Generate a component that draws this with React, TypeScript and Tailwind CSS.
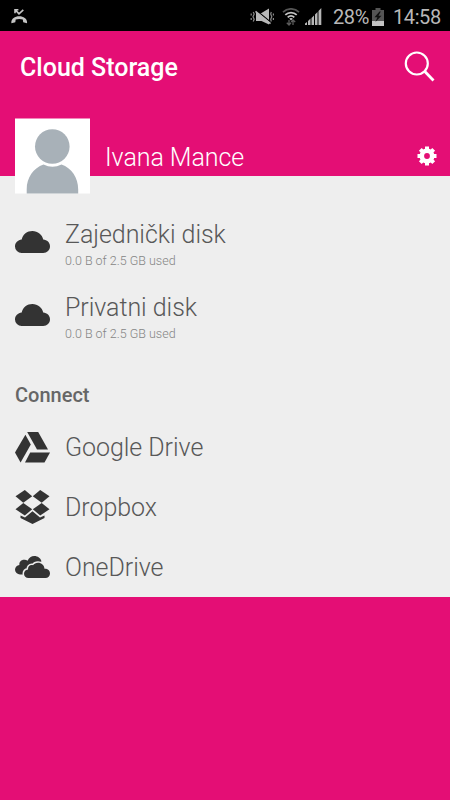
import React from "react";

const CloudIcon = () => (
    <svg width="35" height="22" viewBox="0 0 35 22" fill="#333333">
        <path d="M6.6 22A6.6 6.6 0 0 1 0 15.4C0 11.6 2.900 9 6.700 8.500C7.800 3.400 12.100 0 17.400 0C22.800 0 27.200 3.500 28.200 8.600C32 8.900 35 11.600 35 15.300C35 19.100 32.100 22 28.200 22Z" />
    </svg>
);

const DriveIcon = () => (
    <svg width="35" height="31" viewBox="0 0 35 31" fill="#333333">
        <path d="M12.200 0H23.200L33 17.500H22Z" />
        <path d="M10.400 2.800L15.800 12.500L5.600 30.600L0 20.500Z" />
        <path d="M15.200 20.500H35L29.500 30.600H10Z" />
    </svg>
);

const DropboxIcon = () => (
    <svg width="35" height="34" viewBox="0 0 35 34" fill="#333333">
        <path d="M9.800 0L17.200 6.300L8.300 12.700L.5 6.300Z" />
        <path d="M25.200 0L34.500 6.300L26.700 12.700L17.800 6.300Z" />
        <path d="M8.300 13L17.200 19.300L9.800 25.600L.5 19.300Z" />
        <path d="M26.700 13L34.500 19.300L25.200 25.600L17.800 19.300Z" />
        <path d="M17.500 21.200L25 27.500L29.500 25.400V28L17.500 34L5.500 28V25.400L10 27.500Z" />
    </svg>
);

const OneDriveIcon = () => (
    <svg width="35" height="22" viewBox="0 0 35 22">
        <path
            fill="#333333"
            d="M8 18.500H5A5 5 0 0 1 0 13.700C0 11 2 9.200 4.400 8.900C4 5.800 6.300 3.700 9 3.700C10.400 3.700 11.600 4 12.600 4.800C13.800 1.900 16.400 0 19.300 0C22.800 0 25.600 2.100 26.500 5.300L20 12Z"
        />
        <path
            fill="#333333"
            stroke="#eeeeee"
            strokeWidth="3"
            paintOrder="stroke"
            d="M13.500 22C10.900 22 9 20.100 9 17.700C9 15.300 10.700 13.700 13 13.400C12.700 10.800 14.500 8.900 17 9C17.300 9 17.700 9 18 9.200C19.100 7.600 20.900 6.700 23 6.700C26.500 6.700 29.200 9.200 29.500 12.700C32.700 12.500 35 14.600 35 17.400C35 20.100 33 22 30.500 22Z"
        />
    </svg>
);

const MissedCallIcon = () => (
    <svg width="17" height="15" viewBox="0 0 17 15" fill="#c4c4c4">
        <path d="M4 4.200V.7H7.400M4.500 1.100L8 4.800L12.300 .9" fill="none" stroke="#c4c4c4" strokeWidth="1.600" />
        <path d="M.4 14.200C-.2 10.300 3.500 7.300 8.200 7.300S16.700 10.300 16 14.200L12.200 13.200L11.800 10.600C9.600 9.800 6.900 9.800 4.700 10.600L4.300 13.200Z" />
    </svg>
);

const MuteIcon = () => (
    <svg width="24" height="18" viewBox="0 0 24 18" fill="#b8b8b8">
        <path d="M6 5H11.500L19 .5V16.500L11.500 13H6Z" />
        <path d="M6.500 2.500L20.500 14" stroke="#000" strokeWidth="1.200" />
        <path d="M5.500 3.300L20.500 15.700" stroke="#b8b8b8" strokeWidth="1.500" />
        <path
            d="M3.200 4L4.200 6L3 8.700L4.200 11.200L3.200 13.500M1.200 5.500V7.500M1.200 10V12M21.300 4L20.700 6L21.800 8.700L20.700 11.200L21.300 13.500M23.400 5.500V7.500M23.400 10V12"
            fill="none"
            stroke="#8a8a8a"
            strokeWidth="1.200"
        />
    </svg>
);

const WifiIcon = () => (
    <svg width="18" height="18" viewBox="0 0 18 18" fill="none">
        <path d="M1 4.200C5.500 -.3 12.500 -.3 17 4.200" stroke="#555555" strokeWidth="1.700" />
        <path d="M3.300 6.900C6.500 3.800 11.500 3.800 14.700 6.900M5.700 9.300C7.600 7.500 10.400 7.500 12.300 9.300" stroke="#c4c4c4" strokeWidth="1.800" />
        <path d="M7.200 10.600Q9 9.400 10.800 10.600L9 12.500Z" fill="#c4c4c4" />
        <path d="M7 12V17M4.800 14.700L7 17L9 14.700M11 17V12M9.200 14L11 12L13.200 14" stroke="#5c5c5c" strokeWidth="1.300" />
    </svg>
);

const SignalIcon = () => (
    <svg width="17" height="17" viewBox="0 0 17 17" fill="#b7b7b7">
        <path d="M0 17V15.500L2 14V17ZM3 17V13L5.500 10.500V17ZM6.500 17V10L9 7.500V17ZM10 17V6.500L12.500 4V17ZM13.500 17V3L16.300 0V17Z" />
    </svg>
);

const BatteryIcon = () => (
    <svg width="12" height="18" viewBox="0 0 12 18">
        <path fill="#555555" d="M3.500 0H8.500V2H12V13H0V2H3.500Z" />
        <path fill="#c4c4c4" d="M0 13H12V18H0Z" />
        <path fill="#111" d="M7.500 3.500L2.500 9.300H5.400L3.400 14L9.500 7.800H6.500L8.800 3.500Z" />
    </svg>
);

const SearchIcon = () => (
    <svg width="32" height="32" viewBox="0 0 32 32" fill="none" stroke="#fff">
        <circle cx="12.800" cy="12.500" r="11" strokeWidth="2.200" />
        <path d="M20.600 20.300L29.500 29.500" strokeWidth="2.800" />
    </svg>
);

const GearIcon = () => (
    <svg width="20" height="20" viewBox="0 0 20 20" fill="none" stroke="#fff">
        <circle cx="10" cy="10" r="5.200" strokeWidth="4.600" />
        <path d="M10 .5V4M10 16V19.500M.5 10H4M16 10H19.500M3.300 3.300L5.600 5.600M14.400 14.400L16.700 16.700M16.700 3.300L14.400 5.600M5.600 14.400L3.300 16.700" strokeWidth="4" />
    </svg>
);

const Avatar = () => (
    <svg width="75" height="76" viewBox="0 0 75 76" className="relative shrink-0">
        <path d="M0 .5H75V75.500H0Z" fill="#fff" />
        <path d="M11.700 75.500V71.500C11.700 59.500 18.500 50 28.500 46.500Q37.500 51 46.500 46.500C56.500 50 63.200 59.500 63.200 71.500V75.500Z" fill="#a8b1b8" />
        <circle cx="37.300" cy="28.500" r="17.300" fill="#a8b1b8" />
    </svg>
);

const disks = [
    { name: "Zajednički disk", usage: "0.0 B of 2.5 GB used" },
    { name: "Privatni disk", usage: "0.0 B of 2.5 GB used" },
];

const services = [
    { name: "Google Drive", icon: <DriveIcon /> },
    { name: "Dropbox", icon: <DropboxIcon /> },
    { name: "OneDrive", icon: <OneDriveIcon /> },
];

const StatusBar = () => (
    <div className="flex h-[31px] items-center bg-black pt-[2px] pl-[11px] pr-[9px] text-[#b8b8b8]">
        <MissedCallIcon />
        <div className="ml-auto flex items-center">
            <MuteIcon />
            <div className="ml-[8px] flex"><WifiIcon /></div>
            <div className="ml-[5px] flex"><SignalIcon /></div>
            <span className="ml-[11px] w-[36px] whitespace-nowrap text-[20px] leading-[28px] tracking-[-0.4px]">28%</span>
            <div className="ml-[3px] flex"><BatteryIcon /></div>
            <span className="ml-[9px] w-[48px] whitespace-nowrap text-[20px] leading-[28px] tracking-[-0.4px]">14:58</span>
        </div>
    </div>
);

export default function App() {
    return (
        <div className="h-[800px] w-[450px] overflow-hidden bg-[#e40e75] font-['Roboto',sans-serif]">
            <StatusBar />
            <header className="flex h-[87px] items-start justify-between pl-5 pr-[14px]">
                <h1 className="mt-[21px] text-[25px] leading-[32px] font-medium text-white">Cloud Storage</h1>
                <div className="mt-[20px]"><SearchIcon /></div>
            </header>
            <div className="flex h-[58px] items-start pl-[15px] pr-[13px]">
                <Avatar />
                <span className="mt-[24px] ml-[15px] text-[25px] leading-[32px] font-light tracking-[-0.05px] text-white">Ivana Mance</span>
                <div className="mt-[28px] ml-auto"><GearIcon /></div>
            </div>
            <main className="h-[421px] bg-[#eeeeee] pt-[42px] pl-[15px]">
                {disks.map((disk) => (
                    <div key={disk.name} className="flex h-[73px] items-start">
                        <div className="mt-[13px]"><CloudIcon /></div>
                        <div className="ml-[15px] pt-px">
                            <p className="text-[25px] leading-[32px] font-light tracking-[-0.05px] text-[#585858]">{disk.name}</p>
                            <p className="mt-[2px] text-[12.5px] leading-[16px] font-light text-[#858585]">{disk.usage}</p>
                        </div>
                    </div>
                ))}
                <h2 className="mt-[19px] text-[20px] leading-[24px] font-medium text-[#666666]">Connect</h2>
                <div className="mt-[10px]">
                    {services.map((service) => (
                        <div key={service.name} className="flex h-[60px] items-center">
                            {service.icon}
                            <span className="ml-[15px] pt-[2px] text-[25px] leading-[32px] font-light tracking-[-0.05px] text-[#585858]">{service.name}</span>
                        </div>
                    ))}
                </div>
            </main>
        </div>
    );
}
